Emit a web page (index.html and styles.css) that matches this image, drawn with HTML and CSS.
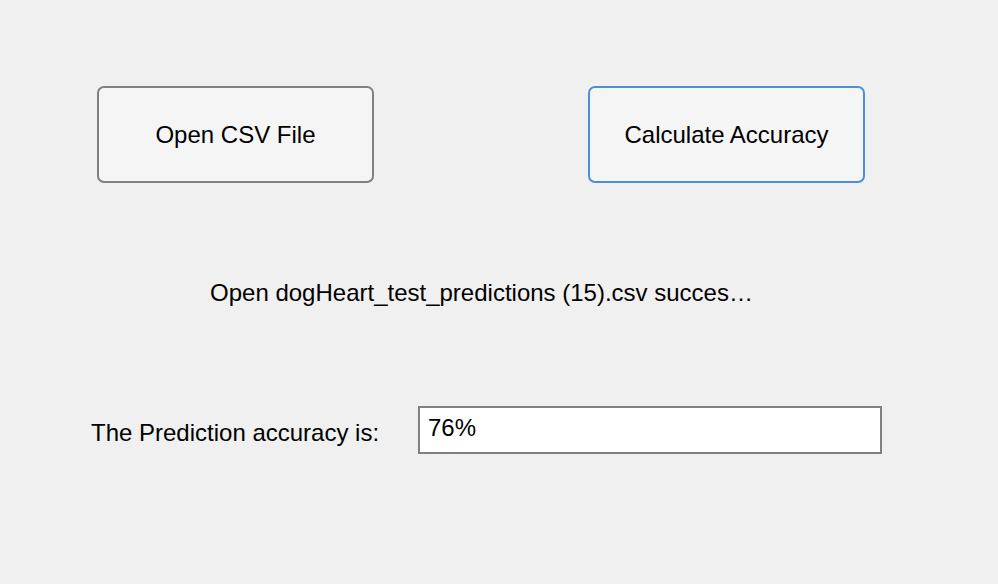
FILE: index.html
```html
<!DOCTYPE html>
<html>
<head>
<meta charset="utf-8">
<link rel="stylesheet" href="styles.css">
</head>
<body>
<div class="app">
  <div class="buttons">
    <button class="btn">Open CSV File</button>
    <button class="btn btn-focus">Calculate Accuracy</button>
  </div>
  <div class="status">Open dogHeart_test_predictions (15).csv succes…</div>
  <div class="result">
    <span class="label">The Prediction accuracy is:</span>
    <div class="field">76%</div>
  </div>
</div>
</body>
</html>
```
FILE: styles.css
```css
html, body {
  margin: 0;
  padding: 0;
  background: #f0f0f0;
}
body {
  width: 998px;
  height: 584px;
  overflow: hidden;
  font-family: "Liberation Sans", Arial, sans-serif;
  color: #000;
}
.app {
  display: flex;
  flex-direction: column;
  padding-top: 86px;
}
.buttons {
  display: flex;
  gap: 214px;
  padding-left: 97px;
}
.btn {
  width: 277px;
  height: 97px;
  box-sizing: border-box;
  background: #f5f5f5;
  border: 2px solid #808080;
  border-radius: 7px;
  font-family: "Liberation Sans", Arial, sans-serif;
  font-size: 24px;
  color: #000;
  padding: 0;
}
.btn-focus {
  border-color: #4a8fdb;
}
.status {
  width: 769px;
  margin-left: 97px;
  margin-top: 96px;
  text-align: center;
  font-size: 24px;
  line-height: 28px;
  white-space: nowrap;
}
.result {
  display: flex;
  align-items: center;
  margin-top: 99px;
  padding-left: 91px;
}
.label {
  font-size: 24px;
  line-height: 28px;
  width: 327px;
  padding-top: 6px;
}
.field {
  width: 464px;
  height: 48px;
  box-sizing: border-box;
  background: #fff;
  border: 2px solid #808080;
  font-size: 24px;
  line-height: 28px;
  padding: 6px 0 0 8px;
}
```
